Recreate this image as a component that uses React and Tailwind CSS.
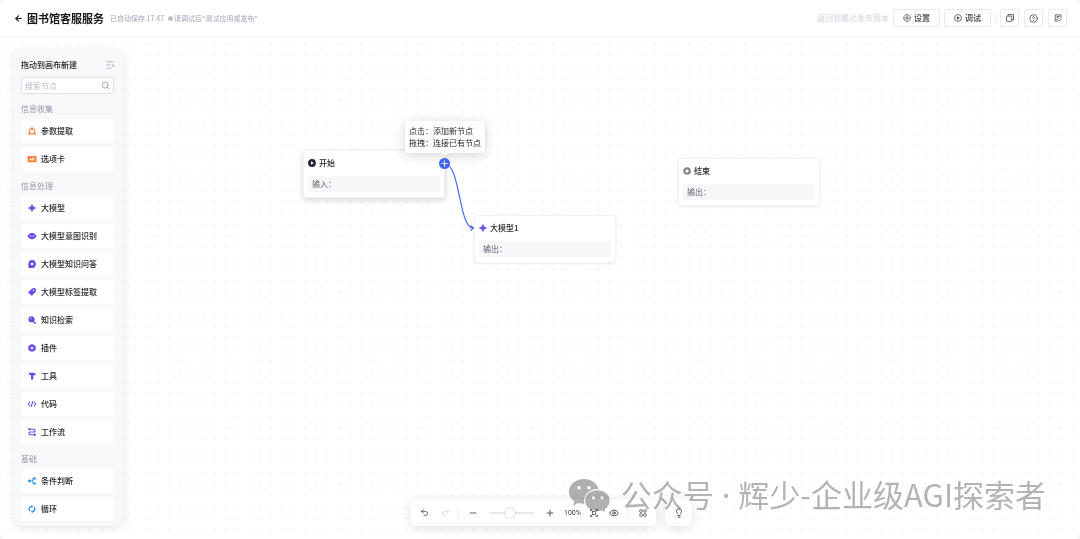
import {
  ArrowLeft,
  CircleHelp,
  Eye,
  Lightbulb,
  Minus,
  Plus,
  Redo2,
  Search,
  Undo2,
} from 'lucide-react'

const glyphs = {
  extract: (
    <g fill="none" stroke="currentColor">
      <circle cx="8" cy="8.5" r="5.4" strokeWidth="2.2" />
      <g fill="currentColor" stroke="#fff" strokeWidth="0.8">
        <circle cx="8" cy="3.2" r="3.1" />
        <circle cx="3" cy="12.4" r="3.1" />
        <circle cx="13" cy="12.4" r="3.1" />
      </g>
    </g>
  ),
  card: (
    <>
      <rect x="-1" y="2" width="18" height="12.5" rx="1.5" fill="currentColor" />
      <g fill="none" stroke="#fff" strokeWidth="1.3">
        <path d="M3.5 10.8 5.3 6l1.8 4.8M4.1 9.4h2.4" />
        <path d="M9.2 5.8v4.6h2a1.2 1.2 0 0 0 0-2.4h-2 1.8a1.1 1.1 0 0 0 0-2.2z" />
      </g>
    </>
  ),
  spark: (
    <path
      d="M8 1c.9 4 2.8 6.1 7 7-4.2.9-6.1 3-7 7-.9-4-2.8-6.1-7-7 4.2-.9 6.1-3 7-7Z"
      fill="currentColor"
      stroke="currentColor"
      strokeWidth="1.6"
      strokeLinejoin="round"
    />
  ),
  robot: (
    <>
      <rect x="1.5" y="2" width="13" height="12.5" rx="5.5" fill="currentColor" />
      <path d="M-.5 6h17v4.5h-17z" fill="currentColor" />
      <circle cx="5.5" cy="8" r="1.3" fill="#fff" />
      <circle cx="10.5" cy="8" r="1.3" fill="#fff" />
    </>
  ),
  answer: (
    <>
      <path d="M8 .2a7.8 7.8 0 1 1 0 15.6H.8V8A7.8 7.8 0 0 1 8 .2Z" fill="currentColor" />
      <path d="m8 4 1.3 2.700L12 8 9.300 9.300 8 12 6.700 9.300 4 8l2.700-1.300Z" fill="#fff" />
    </>
  ),
  tag: (
    <>
      <path d="m8.5 1.5 6-.5.5 6-7.5 8L1 8.5Z" fill="currentColor" stroke="currentColor" strokeWidth="1.5" strokeLinejoin="round" />
      <circle cx="11" cy="5" r="1.4" fill="#fff" />
    </>
  ),
  search: (
    <>
      <circle cx="7" cy="6.5" r="6.2" fill="currentColor" />
      <path d="m10 10 4.5 4.5" stroke="currentColor" strokeWidth="3" strokeLinecap="round" />
      <path d="M4 6.5a3 3 0 0 1 3-3" stroke="#fff" strokeWidth="1.3" fill="none" />
    </>
  ),
  plugin: (
    <>
      <path d="m8 0 7.3 4v8L8 16 .7 12V4Z" fill="currentColor" />
      <path d="M4.500 6.200h7L9.200 9v2.300H6.800V9Z" fill="#fff" />
    </>
  ),
  tool: <path fill="currentColor" d="M1 1.500h11.500L15.500 5v1.500h-5V15H6V6H2.800Z" />,
  code: (
    <path d="M4.200 3.500.5 8l3.700 4.500M11.800 3.500 15.500 8l-3.700 4.500M9.500 2.500l-3 11" fill="none" stroke="currentColor" strokeWidth="2.100" />
  ),
  flow: (
    <g fill="none" stroke="currentColor" strokeWidth="2.200">
      <path d="M2.500 2.500h9a2.700 2.700 0 0 1 0 5.500h-7a2.700 2.700 0 0 0 0 5.500h9" />
      <circle cx="2.500" cy="2.500" r="1.200" fill="currentColor" />
      <circle cx="13.500" cy="13.500" r="1.200" fill="currentColor" />
    </g>
  ),
  branch: (
    <>
      <circle cx="3" cy="8" r="2.900" fill="currentColor" />
      <path d="M5 8h4M13 3H9.500v10H13" fill="none" stroke="currentColor" strokeWidth="1.800" />
      <rect x="11.300" y="1" width="4.200" height="4.200" fill="currentColor" />
      <rect x="11.300" y="10.800" width="4.200" height="4.200" fill="currentColor" />
    </>
  ),
  loop: (
    <g fill="none" stroke="currentColor" strokeWidth="2.600">
      <path d="M4.300 12.200A5.500 5.500 0 0 1 7 2.600M11.700 3.800a5.500 5.500 0 0 1-2.700 9.600" />
      <path d="M6.500-.3v6L10.500 2.700ZM9.500 10.300v6L5.500 13.300Z" fill="currentColor" stroke="none" />
    </g>
  ),
  play: (
    <>
      <circle cx="8" cy="8" r="7.800" fill="currentColor" />
      <path d="M6 4.500 11.500 8 6 11.500Z" fill="#fff" />
    </>
  ),
  stop: (
    <>
      <circle cx="8" cy="8" r="5.400" fill="none" stroke="currentColor" strokeWidth="4.600" />
      <rect x="6" y="6" width="4" height="4" fill="#fff" />
    </>
  ),
  settings: (
    <g fill="none" stroke="currentColor" strokeWidth="1.600">
      <path d="M5.500 1.500h5L12 3.300l2.200 2.200v5L12 12.700l-1.500 1.800h-5L4 12.700l-2.200-2.200v-5L4 3.300Z" strokeLinejoin="round" />
      <circle cx="8" cy="8" r="2.400" />
    </g>
  ),
  debug: (
    <>
      <circle cx="8" cy="8" r="6.900" fill="none" stroke="currentColor" strokeWidth="1.500" />
      <path d="M6 4.500 11.500 8 6 11.500Z" fill="currentColor" />
    </>
  ),
  windows: (
    <g fill="none" stroke="currentColor" strokeWidth="1.500" strokeLinejoin="round">
      <rect x="1" y="4.200" width="10.500" height="10.500" rx="1" />
      <path d="M4 4V1.200h11v10.600h-3.300" />
    </g>
  ),
  note: (
    <g fill="none" stroke="currentColor" strokeWidth="1.500">
      <path d="M14 8V1.800H2.500v12.400H8M5 5h6.500M5 8h5M5 11h2.500" />
      <path d="m9 12 2 2 3.500-4.500" />
    </g>
  ),
  collapse: (
    <>
      <path d="M1 1.500h14M1 8h8M1 14.500h10" fill="none" stroke="currentColor" strokeWidth="1.400" />
      <path d="M15.500 5.800v6L11.500 8.800Z" fill="currentColor" />
    </>
  ),
  fit: (
    <g fill="none" stroke="currentColor" strokeWidth="1.400">
      <path d="M1 4.500V1h3.500M11.500 1H15v3.500M15 11.500V15h-3.500M4.500 15H1v-3.500M2 2l3 3M14 2l-3 3M2 14l3-3M14 14l-3-3" />
      <rect x="5" y="5" width="6" height="6" />
    </g>
  ),
  grid: (
    <g fill="none" stroke="currentColor" strokeWidth="1.500">
      <rect x="1.500" y="1.500" width="5" height="5" rx="1" />
      <rect x="9.500" y="1.500" width="5" height="5" rx="2" />
      <rect x="1.500" y="9.500" width="5" height="5" rx="1" />
      <rect x="9.500" y="9.500" width="5" height="5" rx="1" />
    </g>
  ),
}

function Glyph({ name, className = '' }) {
  return (
    <svg viewBox="0 0 16 16" className={`size-2 shrink-0 overflow-visible ${className}`} aria-hidden="true">
      {glyphs[name]}
    </svg>
  )
}

const groups = [
  {
    title: '信息收集',
    color: 'text-[#ff7f3f]',
    items: [
      ['extract', '参数提取'],
      ['card', '选项卡'],
    ],
  },
  {
    title: '信息处理',
    color: 'text-[#6a4ae8]',
    items: [
      ['spark', '大模型'],
      ['robot', '大模型意图识别'],
      ['answer', '大模型知识问答'],
      ['tag', '大模型标签提取'],
      ['search', '知识检索'],
      ['plugin', '插件'],
      ['tool', '工具'],
      ['code', '代码'],
      ['flow', '工作流'],
    ],
  },
  {
    title: '基础',
    color: 'text-[#2a93ee]',
    items: [
      ['branch', '条件判断'],
      ['loop', '循环'],
    ],
  },
]

function Header() {
  const button = 'flex h-[18px] items-center justify-center rounded-xs border border-[#e9eaee] bg-white text-[#3c3e46]'
  return (
    <header className="relative z-10 flex h-9 shrink-0 items-center bg-white pr-[13px] pl-3.5 shadow-[0_1px_3px_rgba(0,0,0,0.06)]">
      <button type="button" aria-label="返回" className="text-[#1c1d22]">
        <ArrowLeft size={9} strokeWidth={3} />
      </button>
      <h1 className="ml-1 text-[11px] font-bold text-[#15161a]">图书馆客服服务</h1>
      <p className="ml-1.5 flex items-center text-[7px] text-[#a2a6b4]">
        已自动保存 17:47
        <span className="mr-px ml-1 size-[5px] rounded-full bg-[#c0c3cf]" />
        请调试后"测试应用或发布"
      </p>
      <div className="ml-auto flex items-center">
        <button type="button" disabled className="mr-1 text-[8px] text-[#cfd2dc]">
          返回到最近发布版本
        </button>
        <button type="button" className={`${button} w-[47px] gap-[3px] text-[8px] font-medium`}>
          <Glyph name="settings" />
          设置
        </button>
        <button type="button" className={`${button} ml-1 w-[47px] gap-[3px] text-[8px] font-medium`}>
          <Glyph name="debug" />
          调试
        </button>
        <span className="mx-1 h-2 w-px bg-[#ececf0]" />
        <div className="flex gap-[5px]">
          <button type="button" aria-label="窗口" className={`${button} w-[19px]`}>
            <Glyph name="windows" />
          </button>
          <button type="button" aria-label="帮助" className={`${button} w-[19px]`}>
            <CircleHelp size={9} strokeWidth={2} />
          </button>
          <button type="button" aria-label="记录" className={`${button} w-[19px]`}>
            <Glyph name="note" />
          </button>
        </div>
      </div>
    </header>
  )
}

function Sidebar() {
  return (
    <aside className="relative mt-3.5 mb-[13px] ml-3.5 w-[110px] rounded-md bg-[#f7f8fa] px-[7px] pt-[9px] shadow-[0_2px_10px_rgba(0,0,0,0.1)]">
      <div className="flex h-3 items-center justify-between pr-[3px]">
        <h2 className="text-[8px] font-medium text-[#26272d]">拖动到画布新建</h2>
        <button type="button" aria-label="收起" className="text-[#9a9eae]">
          <Glyph name="collapse" />
        </button>
      </div>
      <label className="mt-1.5 mr-[3px] flex h-[17px] items-center rounded-xs border border-[#e0e2e8] bg-white px-[3px]">
        <input
          type="text"
          aria-label="搜索节点"
          placeholder="搜索节点"
          className="w-full min-w-0 text-[8px] text-[#26272d] outline-none placeholder:text-[#b9bcc8]"
        />
        <Search size={9} strokeWidth={2} className="shrink-0 text-[#8f93a3]" />
      </label>
      {groups.map((group) => (
        <section key={group.title} className="mr-[3px] mt-[9px]">
          <h3 className="h-3 text-[8px] leading-3 text-[#9599ab]">{group.title}</h3>
          <ul className="mt-1 flex flex-col gap-1">
            {group.items.map(([icon, label]) => (
              <li key={label} className="flex h-6 items-center gap-[5px] rounded-[3px] bg-white pl-[7px] text-[8px] font-medium text-[#26272d]">
                <Glyph name={icon} className={group.color} />
                {label}
              </li>
            ))}
          </ul>
        </section>
      ))}
    </aside>
  )
}

function Node({ icon, iconColor, title, field, className }) {
  return (
    <article className={`absolute h-12 w-[142px] rounded-[3px] border border-[#f3f3f5] bg-white px-1 pt-1.5 ${className}`}>
      <h2 className="flex h-3 items-center gap-[3px] text-[8px] font-medium text-[#26272d]">
        <Glyph name={icon} className={iconColor} />
        {title}
      </h2>
      <p className="mt-[7px] h-4 rounded-xs bg-[#f6f7f9] pl-1 text-[8px] leading-4 text-[#5d6070]">{field}</p>
    </article>
  )
}

function Canvas() {
  return (
    <>
      <svg className="absolute inset-0 size-full" aria-hidden="true">
        <defs>
          <pattern id="dots" x="-5.6" y="2.3" width="11.29" height="11.29" patternUnits="userSpaceOnUse">
            <circle cx="5.64" cy="5.64" r="0.8" fill="#e8e9ed" />
          </pattern>
        </defs>
        <rect width="100%" height="100%" fill="url(#dots)" />
      </svg>
      <Node
        icon="play"
        iconColor="text-[#26283a]"
        title="开始"
        field="输入："
        className="top-[114px] left-[303px] shadow-[0_2px_6px_rgba(0,0,0,0.18)]"
      />
      <Node
        icon="spark"
        iconColor="text-[#6a4ae8]"
        title="大模型1"
        field="输出："
        className="top-[179px] left-[474px] shadow-[0_1px_3px_rgba(0,0,0,0.08)]"
      />
      <Node
        icon="stop"
        iconColor="text-[#85868a]"
        title="结束"
        field="输出："
        className="top-[122px] left-[678px] shadow-[0_1px_3px_rgba(0,0,0,0.08)]"
      />
      <svg viewBox="0 0 40 80" className="absolute top-[120px] left-[440px] h-20 w-10" fill="none" stroke="#4a6cf7" aria-hidden="true">
        <path d="M5 8C20 8 19 72 33 72" strokeWidth="1.2" />
        <path d="m30.5 69.5 3 2.5-3 2.5" strokeWidth="1.2" />
      </svg>
      <button
        type="button"
        aria-label="添加新节点"
        className="absolute top-[122px] left-[439px] flex size-[11px] items-center justify-center rounded-full bg-[#4568f5] text-white"
      >
        <Plus size={9} strokeWidth={2.5} />
      </button>
      <div
        role="tooltip"
        className="absolute top-[85px] left-[405px] rounded-[3px] bg-white px-1 py-1 text-[8px] leading-3 text-[#26272d] shadow-[0_2px_12px_rgba(0,0,0,0.18)]"
      >
        <p>点击：添加新节点</p>
        <p>拖拽：连接已有节点</p>
        <span className="absolute top-full left-1/2 -mt-1 size-1.5 -translate-x-1/2 rotate-45 bg-white" />
      </div>
    </>
  )
}

function Toolbar() {
  return (
    <div className="absolute bottom-[13px] left-[411px] flex gap-[9px] text-[#3c3e46]">
      <div className="flex h-[27px] w-[245px] items-center rounded-md bg-white px-[9px] shadow-[0_2px_12px_rgba(0,0,0,0.12)]">
        <button type="button" aria-label="撤销">
          <Undo2 size={9} />
        </button>
        <button type="button" aria-label="重做" className="ml-3 text-[#d5d7dd]">
          <Redo2 size={9} />
        </button>
        <span className="ml-2 h-2 w-px bg-[#ececf0]" />
        <button type="button" aria-label="缩小" className="ml-[9px]">
          <Minus size={10} />
        </button>
        <input
          type="range"
          aria-label="缩放"
          defaultValue="46"
          className="mx-[11px] h-0.5 w-[45px] appearance-none rounded-full bg-[#e8e9ee] [&::-webkit-slider-thumb]:size-[10px] [&::-webkit-slider-thumb]:appearance-none [&::-webkit-slider-thumb]:rounded-full [&::-webkit-slider-thumb]:bg-white [&::-webkit-slider-thumb]:shadow-[0_0_2px_rgba(0,0,0,0.35)]"
        />
        <button type="button" aria-label="放大">
          <Plus size={10} />
        </button>
        <span className="ml-[9px] w-[17px] font-['Roboto',sans-serif] text-[7px] leading-3">100%</span>
        <button type="button" aria-label="适应画布" className="ml-[9px]">
          <Glyph name="fit" />
        </button>
        <button type="button" aria-label="预览" className="ml-[11px]">
          <Eye size={10} />
        </button>
        <span className="ml-[9px] h-2 w-px bg-[#ececf0]" />
        <button type="button" aria-label="布局" className="ml-auto">
          <Glyph name="grid" />
        </button>
      </div>
      <button type="button" aria-label="提示" className="flex size-[27px] items-center justify-center rounded-md bg-white shadow-[0_2px_12px_rgba(0,0,0,0.12)]">
        <Lightbulb size={10} />
      </button>
    </div>
  )
}

function Watermark() {
  return (
    <div className="pointer-events-none absolute right-[34px] bottom-[26px] flex items-center gap-[9px] mix-blend-multiply">
      <svg viewBox="0 0 44 36" className="h-9 w-11" aria-hidden="true">
        <path d="M16 2C7.5 2 1 7.7 1 14.7c0 4 2 7.3 5.3 9.6L5 28.8l5.200-2.800c1.900.5 3.800.8 5.800.8 8.500 0 15-5.400 15-12.100S24.500 2 16 2Z" fill="#b0b0b0" />
        <path d="M29.500 12.700c-7.300 0-12.900 4.900-12.900 11s5.600 11 12.900 11c1.600 0 3.100-.2 4.500-.6l4.300 2.300-1.100-3.800c3-2 5-5.200 5-8.900 0-6.100-5.500-11-12.700-11Z" fill="#b0b0b0" stroke="#fff" strokeWidth="1.200" />
        <g fill="#fff">
          <circle cx="11" cy="10.800" r="1.800" />
          <circle cx="21" cy="10.800" r="1.800" />
          <circle cx="25.500" cy="20.700" r="1.500" />
          <circle cx="34" cy="20.700" r="1.500" />
        </g>
      </svg>
      <p className="font-['Noto_Sans','Noto_Sans_CJK_SC',sans-serif] text-[31px] leading-9 whitespace-nowrap text-[#b4b4b4]">
        公众号 · <span className="font-['Noto_Sans_CJK_SC',sans-serif]">辉少-企业级AGI探索者</span>
      </p>
    </div>
  )
}

export default function App() {
  return (
    <div className="h-screen bg-[#f3f3f4]">
      <div className="relative flex h-full flex-col overflow-hidden rounded-md bg-white font-['Noto_Sans_CJK_SC',sans-serif]">
        <Header />
        <main className="relative flex flex-1">
          <Canvas />
          <Sidebar />
          <Toolbar />
          <Watermark />
        </main>
      </div>
    </div>
  )
}
